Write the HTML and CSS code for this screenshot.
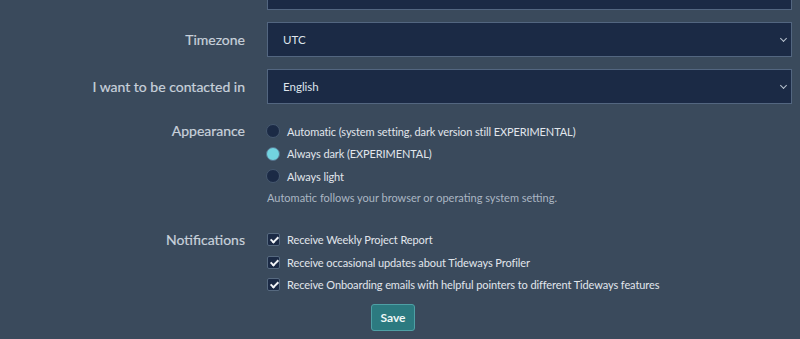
FILE: index.html
```html
<!DOCTYPE html>
<html lang="en">

<head>
    <meta charset="UTF-8">
    <meta name="viewport" content="width=device-width, initial-scale=1.0">
    <title>Profile settings</title>
    <link rel="stylesheet" href="styles.css">
</head>

<body>

    <form class="settings">
        <!-- Previous field, scrolled mostly out of view -->
        <div class="row">
            <label class="label"></label>
            <div class="control">
                <div class="select"><span></span></div>
            </div>
        </div>

        <div class="row">
            <label class="label">Timezone</label>
            <div class="control">
                <div class="select"><span>UTC</span><span class="chevron"></span></div>
            </div>
        </div>

        <div class="row">
            <label class="label">I want to be contacted in</label>
            <div class="control">
                <div class="select"><span>English</span><span class="chevron"></span></div>
            </div>
        </div>

        <!-- Appearance -->
        <div class="row row-options">
            <label class="label">Appearance</label>
            <div class="control options">
                <div class="option"><span class="radio"></span>Automatic (system setting, dark version still EXPERIMENTAL)</div>
                <div class="option"><span class="radio checked"></span>Always dark (EXPERIMENTAL)</div>
                <div class="option"><span class="radio"></span>Always light</div>
                <p class="help">Automatic follows your browser or operating system setting.</p>
            </div>
        </div>

        <!-- Notifications -->
        <div class="row row-options row-notify">
            <label class="label">Notifications</label>
            <div class="control options">
                <div class="option"><span class="checkbox"></span>Receive Weekly Project Report</div>
                <div class="option"><span class="checkbox"></span>Receive occasional updates about Tideways Profiler</div>
                <div class="option"><span class="checkbox"></span>Receive Onboarding emails with helpful pointers to different Tideways features</div>
            </div>
        </div>

        <div class="actions">
            <button type="button" class="btn-save">Save</button>
        </div>
    </form>

</body>

</html>
```

FILE: styles.css
```css
body {
    font-family: "Lato", "Noto Sans", sans-serif;
    background-color: #3a4a5c;
    color: #d3dbe3;
    margin: 0;
    padding: 0;
}

.settings {
    margin-top: -25px;
}

.row {
    display: grid;
    grid-template-columns: 245px 525px;
    column-gap: 22px;
    align-items: center;
    margin-bottom: 12px;
}

.label {
    text-align: right;
    font-size: 14px;
    color: #c8d1db;
    -webkit-text-stroke: 0.2px #c8d1db;
}

.select {
    height: 33px;
    display: flex;
    align-items: center;
    justify-content: space-between;
    padding: 0 5px 0 15px;
    background-color: #1b2a45;
    border: 1px solid #536680;
    font-size: 11.5px;
    color: #dfe5ec;
}

.chevron {
    width: 4px;
    height: 4px;
    border-right: 1.5px solid #b9c3cf;
    border-bottom: 1.5px solid #b9c3cf;
    transform: rotate(45deg);
    margin-top: -3px;
}

.row-options {
    align-items: start;
    margin-top: 16px;
}

.row-options .label {
    line-height: 22px;
}

.options {
    display: flex;
    flex-direction: column;
}

.option {
    display: flex;
    align-items: center;
    height: 22.5px;
    font-size: 11px;
    letter-spacing: -0.1px;
    color: #e1e6ec;
}

.radio {
    width: 12px;
    height: 12px;
    border-radius: 50%;
    background-color: #1b2a45;
    border: 1px solid #46586f;
    margin-right: 7px;
    margin-left: -1px;
}

.radio.checked {
    background-color: #72d3e0;
    border-color: #55718c;
}

.checkbox {
    position: relative;
    width: 11px;
    height: 11px;
    border-radius: 2px;
    background-color: #1b2a45;
    border: 1px solid #56697f;
    margin-right: 7px;
}

.checkbox::after {
    content: "";
    position: absolute;
    left: 3.5px;
    top: 1px;
    width: 3px;
    height: 6px;
    border-right: 2px solid #f2f5f8;
    border-bottom: 2px solid #f2f5f8;
    transform: rotate(45deg);
}

.help {
    margin: 3px 0 0;
    font-size: 11px;
    color: #aab6c3;
}

.row-notify {
    margin-top: 25px;
}

.actions {
    padding-left: 371px;
    margin-top: -4px;
}

.btn-save {
    width: 44px;
    height: 27px;
    border: 1px solid #4ea0a5;
    border-radius: 3px;
    background-color: #2c7a80;
    color: #eef6f6;
    font-family: inherit;
    font-size: 12px;
    font-weight: bold;
    cursor: pointer;
}
```
